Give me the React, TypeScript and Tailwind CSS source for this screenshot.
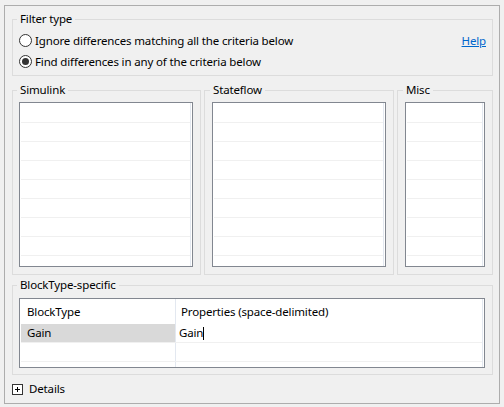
import React from 'react';

const font = "font-['Noto_Sans',_'Open_Sans',_sans-serif]";

function Radio({ checked, label }: { checked?: boolean; label: string }) {
  return (
    <div className="flex items-center h-[21px]">
      <span className="w-[13px] h-[13px] rounded-full border border-[#333333] bg-white flex items-center justify-center shrink-0">
        {checked && <span className="w-[7px] h-[7px] rounded-full bg-[#333333]" />}
      </span>
      <span className="ml-[3px] leading-[16px]">{label}</span>
    </div>
  );
}

function GroupBox({
  title,
  className,
  bodyClass,
  legendClass,
  children,
}: {
  title: string;
  className?: string;
  bodyClass?: string;
  legendClass?: string;
  children: React.ReactNode;
}) {
  return (
    <fieldset className={`border border-[#dcdcdc] p-0 ${className ?? ''}`}>
      <legend className={`px-[3px] h-[16px] leading-[16px] ${legendClass ?? 'ml-[4px]'}`}>{title}</legend>
      <div className={bodyClass}>{children}</div>
    </fieldset>
  );
}

function ListBox({ width }: { width: string }) {
  const rows = Array.from({ length: 9 });
  return (
    <div className={`${width} h-[165px] mt-[4px] border border-[#828790] bg-white flex overflow-hidden`}>
      <div className="flex-1 pt-[1px] pl-[1px] overflow-hidden">
        {rows.map((_, i) => (
          <div key={i} className="h-[19px] border-b border-[#f0f0f0]" />
        ))}
      </div>
      <div className="w-[1px] bg-[#e3e8f0]" />
      <div className="w-[1px]" />
    </div>
  );
}

export default function App() {
  return (
    <div className={`w-[504px] h-[407px] bg-[#f0f0f0] pt-[5px] pl-[4px] text-[11.5px] tracking-[-0.15px] text-black ${font}`}>
      <div className="w-[496px] h-[399px] border border-[#adadad] pt-[5px] pl-[7px] pr-[6px] flex flex-col">
        {/* Filter type */}
        <GroupBox title="Filter type" className="h-[65px]" bodyClass="pt-[3px] pl-[6px] pr-[6px]">
          <div className="flex items-center justify-between">
            <Radio label="Ignore differences matching all the criteria below" />
            <a className="text-[#0066cc] underline leading-[16px] cursor-pointer">Help</a>
          </div>
          <Radio checked label="Find differences in any of the criteria below" />
        </GroupBox>

        {/* criteria lists */}
        <div className="flex gap-[3px] mt-[6px]">
          <GroupBox title="Simulink" className="w-[189px] h-[193px]" bodyClass="pl-[6px]">
            <ListBox width="w-[174px]" />
          </GroupBox>
          <GroupBox title="Stateflow" className="w-[190px] h-[193px]" bodyClass="pl-[7px]" legendClass="ml-[5px]">
            <ListBox width="w-[174px]" />
          </GroupBox>
          <GroupBox title="Misc" className="w-[96px] h-[193px]" bodyClass="pl-[7px]" legendClass="ml-[5px]">
            <ListBox width="w-[80px]" />
          </GroupBox>
        </div>

        {/* BlockType-specific */}
        <GroupBox title="BlockType-specific" className="h-[98px] mt-[2px]" bodyClass="pl-[6px]">
          <div className="w-[466px] h-[70px] mt-[5px] border border-[#828790] bg-white flex overflow-hidden">
            <div className="flex-1 pl-[1px] flex flex-col">
              <div className="flex h-[25px] items-center">
                <div className="w-[154px] pl-[6px]">BlockType</div>
                <div className="w-[1px] self-stretch bg-[#e3e8f0]" />
                <div className="flex-1 pl-[5px]">Properties (space-delimited)</div>
              </div>
              <div className="flex h-[19px] border-b border-[#f0f0f0]">
                <div className="w-[154px] pl-[6px] bg-[#d9d9d9] flex items-center">Gain</div>
                <div className="w-[1px] bg-[#e3e8f0]" />
                <div className="flex-1 pl-[3px] flex items-center">
                  Gain<span className="w-[1px] h-[13px] bg-black" />
                </div>
              </div>
              <div className="flex h-[19px] border-b border-[#f0f0f0]">
                <div className="w-[154px]" />
                <div className="w-[1px] bg-[#e3e8f0]" />
                <div className="flex-1" />
              </div>
              <div className="flex flex-1">
                <div className="w-[154px]" />
                <div className="w-[1px] bg-[#e3e8f0]" />
                <div className="flex-1" />
              </div>
            </div>
            <div className="w-[1px] bg-[#e3e8f0]" />
            <div className="w-[1px]" />
          </div>
        </GroupBox>

        {/* Details */}
        <div className="flex items-center h-[28px]">
          <span className="w-[11px] h-[11px] border border-[#333333] bg-white relative shrink-0">
            <span className="absolute left-[2px] top-[4px] w-[5px] h-[1px] bg-black" />
            <span className="absolute left-[4px] top-[2px] w-[1px] h-[5px] bg-black" />
          </span>
          <span className="ml-[6px] leading-[16px]">Details</span>
        </div>
      </div>
    </div>
  );
}
